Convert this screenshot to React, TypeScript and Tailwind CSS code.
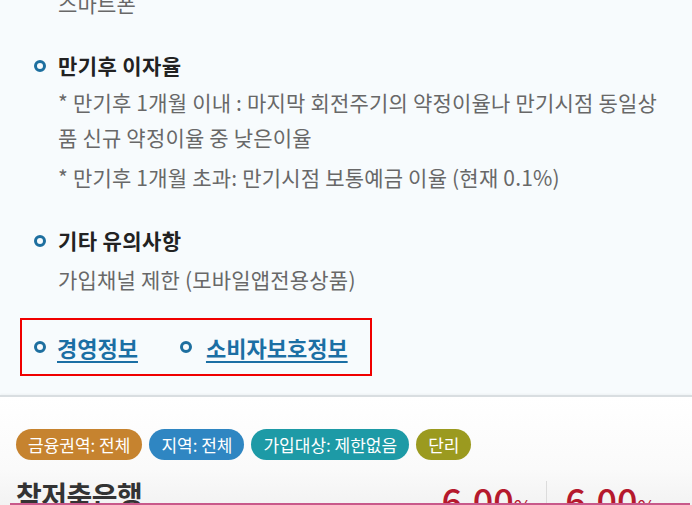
import React from 'react';

const font = "font-['Noto_Sans_CJK_KR','Noto_Sans',sans-serif]";

function Ring() {
  return <span className="inline-block h-[12px] w-[12px] shrink-0 rounded-full border-[3px] border-[#1d6f9f]" />;
}

function Heading({ children }: { children: React.ReactNode }) {
  return (
    <h3 className="flex items-center gap-[12px] text-[21px] font-bold leading-[35px] tracking-[0.4px] text-[#222]">
      <Ring />
      {children}
    </h3>
  );
}

function Body({ children, className = '' }: { children: React.ReactNode; className?: string }) {
  return <p className={`pl-[24px] text-[21px] leading-[35px] tracking-[0.2px] text-[#686868] ${className}`}>{children}</p>;
}

const tags = [
  { label: '금융권역: 전체', color: 'bg-[#c6832f]' },
  { label: '지역: 전체', color: 'bg-[#2f86c2]' },
  { label: '가입대상: 제한없음', color: 'bg-[#1d9aa6]' },
  { label: '단리', color: 'bg-[#9b9a1f]' },
];

export default function App() {
  return (
    <div className={`relative h-[505px] w-[692px] overflow-hidden bg-[#f7fbfd] ${font}`}>
      <div className="px-[20px]">
        <div className="-mt-[14px] pl-[14px]">
          <Body>스마트폰</Body>

          <div className="mt-[27px]">
            <Heading>만기후 이자율</Heading>
            <Body className="mt-[2px]">
              * 만기후 1개월 이내 : 마지막 회전주기의 약정이율나 만기시점 동일상
              <br />
              품 신규 약정이율 중 낮은이율
            </Body>
            <Body className="mt-[5px]">* 만기후 1개월 초과: 만기시점 보통예금 이율 (현재 0.1%)</Body>
          </div>

          <div className="mt-[28px]">
            <Heading>기타 유의사항</Heading>
            <Body className="mt-[4px]">가입채널 제한 (모바일앱전용상품)</Body>
          </div>
        </div>

        <div className="mt-[21px] flex h-[58px] w-[352px] items-center gap-[42px] border-2 border-[#f00000] pl-[12px]">
          <a href="#" className="flex items-center gap-[11px] text-[22px] font-bold text-[#1b6fa4]">
            <Ring />
            <span className="underline decoration-2 underline-offset-[4px]">경영정보</span>
          </a>
          <a href="#" className="flex items-center gap-[14px] text-[22px] font-bold text-[#1b6fa4]">
            <Ring />
            <span className="underline decoration-2 underline-offset-[4px]">소비자보호정보</span>
          </a>
        </div>
      </div>

      <div className="mt-[19px] border-t-2 border-[#d9dee1] bg-gradient-to-b from-white via-[#fafafa] to-[#ebebeb] px-[16px] pt-[32px] pb-[20px] shadow-[0_-1px_2px_rgba(0,0,0,0.04)]">
        <div className="flex gap-[7px]">
          {tags.map((t) => (
            <span key={t.label} className={`flex h-[31px] items-center rounded-full px-[12px] text-[17px] text-white ${t.color}`}>
              {t.label}
            </span>
          ))}
        </div>
        <div className="mt-[17px] flex items-start">
          <div className="flex-1 text-[28px] font-bold leading-[36px] tracking-[-0.5px] text-[#333]">참저축은행</div>
          <div className="flex items-start">
            <div className="flex items-baseline pr-[14px] text-[#b5192d]">
              <span className="text-[36px] font-medium leading-[44px]">6.00</span>
              <span className="text-[20px]">%</span>
            </div>
            <div className="mt-[4px] h-[40px] w-px bg-[#dcdcdc]" />
            <div className="flex items-baseline pl-[18px] pr-[20px] text-[#b5192d]">
              <span className="text-[36px] font-medium leading-[44px]">6.00</span>
              <span className="text-[20px]">%</span>
            </div>
          </div>
        </div>
      </div>

      <div className="pointer-events-none absolute bottom-0 left-[10px] right-[2px] h-[2px] bg-[#c8588a]" />
    </div>
  );
}
